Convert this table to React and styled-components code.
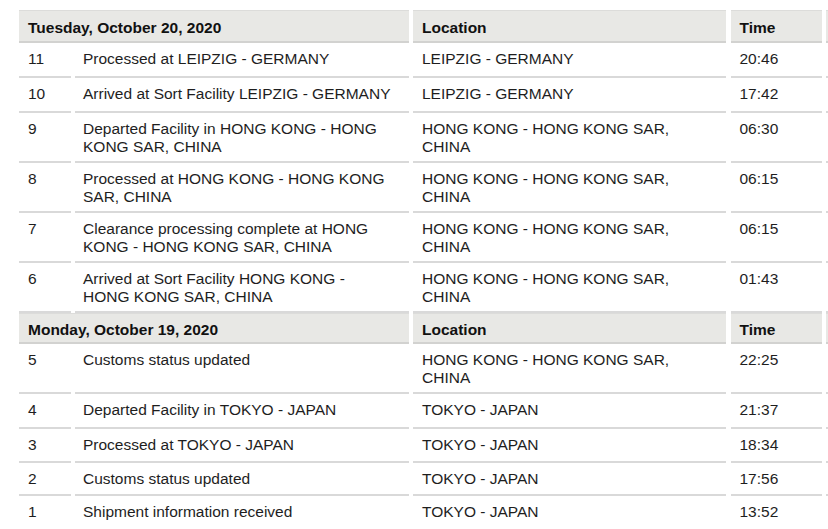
import React from "react";
import styled, { createGlobalStyle } from "styled-components";

const GlobalStyle = createGlobalStyle`
  html, body {
    margin: 0;
    padding: 0;
    background: #ffffff;
    overflow: hidden;
  }
  body {
    font-family: "Liberation Sans", Arial, Helvetica, sans-serif;
    color: #1e1e1e;
  }
`;

const Page = styled.div`
  padding: 10px 0 0 19px;
  width: 1000px;
`;

const Table = styled.div`
  display: grid;
  grid-template-columns: 51.5px 333.5px 313px 91px 100px;
  column-gap: 4.5px;
  font-size: 15.5px;
  line-height: 18px;
`;

const Row = styled.div`
  display: contents;
`;

const HeadCell = styled.div`
  grid-column: span ${(p) => p.$span || 1};
  box-sizing: border-box;
  background: #e8e8e5;
  border-top: 1px solid #dcdcda;
  border-bottom: 2px solid #d2d2d0;
  padding: ${(p) => p.$padTop ?? 8}px 9px ${(p) => p.$padBottom ?? 4}px;
  font-weight: bold;
  color: #111;
  white-space: nowrap;
`;

const Cell = styled.div`
  box-sizing: border-box;
  min-height: ${(p) => p.$minHeight || 35}px;
  border-bottom: 2px solid #d9d9d9;
  padding: 7px ${(p) => p.$padRight || 9}px 5px ${(p) => p.$padLeft || 9}px;
  color: #1e1e1e;
`;

const days = [
  {
    title: "Tuesday, October 20, 2020",
    headTop: 8,
    headBottom: 4,
    events: [
      { n: 11, text: "Processed at LEIPZIG - GERMANY", loc: "LEIPZIG - GERMANY", time: "20:46" },
      { n: 10, text: "Arrived at Sort Facility LEIPZIG - GERMANY", loc: "LEIPZIG - GERMANY", time: "17:42" },
      { n: 9, text: "Departed Facility in HONG KONG - HONG KONG SAR, CHINA", loc: "HONG KONG - HONG KONG SAR, CHINA", time: "06:30" },
      { n: 8, text: "Processed at HONG KONG - HONG KONG SAR, CHINA", loc: "HONG KONG - HONG KONG SAR, CHINA", time: "06:15" },
      { n: 7, text: "Clearance processing complete at HONG KONG - HONG KONG SAR, CHINA", loc: "HONG KONG - HONG KONG SAR, CHINA", time: "06:15" },
      { n: 6, text: "Arrived at Sort Facility HONG KONG - HONG KONG SAR, CHINA", loc: "HONG KONG - HONG KONG SAR, CHINA", time: "01:43" },
    ],
  },
  {
    title: "Monday, October 19, 2020",
    headTop: 7,
    headBottom: 3,
    events: [
      { n: 5, text: "Customs status updated", loc: "HONG KONG - HONG KONG SAR, CHINA", time: "22:25" },
      { n: 4, text: "Departed Facility in TOKYO - JAPAN", loc: "TOKYO - JAPAN", time: "21:37" },
      { n: 3, text: "Processed at TOKYO - JAPAN", loc: "TOKYO - JAPAN", time: "18:34", h: 34 },
      { n: 2, text: "Customs status updated", loc: "TOKYO - JAPAN", time: "17:56", h: 33 },
      { n: 1, text: "Shipment information received", loc: "TOKYO - JAPAN", time: "13:52" },
    ],
  },
];

export default function App() {
  return (
    <>
      <GlobalStyle />
      <Page>
        <Table>
          {days.map((day) => (
            <React.Fragment key={day.title}>
              <Row>
                <HeadCell $span={2} $padTop={day.headTop} $padBottom={day.headBottom}>{day.title}</HeadCell>
                <HeadCell $padTop={day.headTop} $padBottom={day.headBottom}>Location</HeadCell>
                <HeadCell $padTop={day.headTop} $padBottom={day.headBottom}>Time</HeadCell>
                <HeadCell $padTop={day.headTop} $padBottom={day.headBottom} />
              </Row>
              {day.events.map((e) => (
                <Row key={e.n}>
                  <Cell $minHeight={e.h}>{e.n}</Cell>
                  <Cell $minHeight={e.h} $padLeft={8} $padRight={15}>{e.text}</Cell>
                  <Cell $minHeight={e.h} $padRight={15}>{e.loc}</Cell>
                  <Cell $minHeight={e.h}>{e.time}</Cell>
                  <Cell $minHeight={e.h} />
                </Row>
              ))}
            </React.Fragment>
          ))}
        </Table>
      </Page>
    </>
  );
}
